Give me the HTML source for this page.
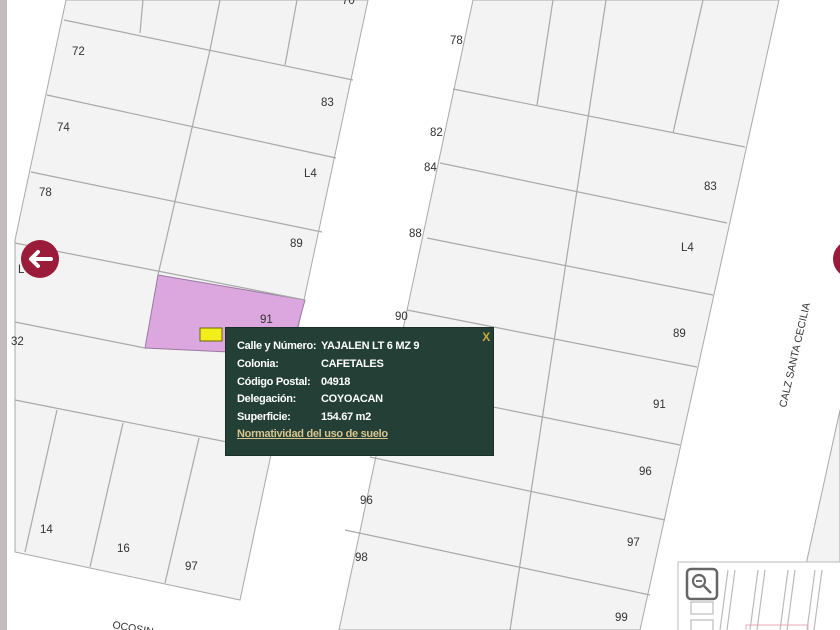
<!DOCTYPE html>
<html><head><meta charset="utf-8"><style>
html,body{margin:0;padding:0;width:840px;height:630px;overflow:hidden;background:#fff;font-family:"Liberation Sans",sans-serif}
svg{position:absolute;left:0;top:0}
.tip{position:absolute;left:225px;top:327px;width:269px;height:129px;background:#233f36;color:#fff;font-size:11px;font-weight:bold;box-sizing:border-box;border:1px solid #1a2e27;letter-spacing:-0.3px}
.tip .r{position:absolute;left:11px;white-space:nowrap}
.tip .v{position:absolute;left:95px;white-space:nowrap}
.tip a{position:absolute;left:11px;top:100px;color:#d8c48e;text-decoration:underline;font-size:11px}
.tip .x{position:absolute;right:3px;top:2px;color:#c9a93a;font-size:12px}
</style></head><body>
<svg width="840" height="630" viewBox="0 0 840 630">
<g fill="#f3f3f3" stroke="#a9a9a9" stroke-width="1">
<polygon points="66,0 368,0 240,600 15,552 15,240"/>
<polygon points="473,0 779,0 640,630 339,630"/>
<polygon points="840,410 840,630 800,630 807,560"/>
</g>
<polygon points="158,275 305,300 290,355 145,348" fill="#dba7de" stroke="#9a7aa0" stroke-width="1"/>
<g stroke="#a9a9a9" stroke-width="1.2" fill="none">
<line x1="64" y1="20" x2="353" y2="80"/>
<line x1="47" y1="95" x2="336" y2="158"/>
<line x1="31" y1="172" x2="322" y2="232"/>
<line x1="15" y1="243" x2="305" y2="300"/>
<line x1="15" y1="322" x2="145" y2="348"/>
<line x1="15" y1="400" x2="227" y2="442"/>
<line x1="143" y1="0" x2="140" y2="33"/>
<line x1="220" y1="0" x2="210" y2="50"/>
<line x1="297" y1="0" x2="285" y2="65"/>
<line x1="210" y1="50" x2="158" y2="275"/>
<line x1="57" y1="410" x2="25" y2="552"/>
<line x1="123" y1="423" x2="90" y2="567"/>
<line x1="199" y1="438" x2="165" y2="583"/>
<line x1="553" y1="0" x2="537" y2="105"/>
<line x1="703" y1="0" x2="673" y2="133"/>
<line x1="606" y1="0" x2="510" y2="630"/>
<line x1="453" y1="89" x2="745" y2="147"/>
<line x1="440" y1="163" x2="727" y2="223"/>
<line x1="427" y1="238" x2="713" y2="295"/>
<line x1="407" y1="310" x2="697" y2="367"/>
<line x1="400" y1="388" x2="680" y2="445"/>
<line x1="370" y1="457" x2="665" y2="520"/>
<line x1="345" y1="530" x2="650" y2="595"/>
</g>
<rect x="0" y="0" width="7" height="630" fill="#c2bcbe"/>
<g font-family="Liberation Sans, sans-serif" font-size="11.5" fill="#333">
<text x="72" y="55">72</text><text x="57" y="131">74</text><text x="39" y="196">78</text>
<text x="321" y="106">83</text><text x="304" y="177">L4</text><text x="290" y="247">89</text>
<text x="260" y="323">91</text><text x="11" y="345">32</text><text x="18" y="273">L</text>
<text x="40" y="533">14</text><text x="117" y="552">16</text><text x="185" y="570">97</text>
<text x="450" y="44">78</text><text x="430" y="136">82</text><text x="424" y="171">84</text>
<text x="409" y="237">88</text><text x="395" y="320">90</text><text x="360" y="504">96</text>
<text x="355" y="561">98</text><text x="342" y="4">70</text>
<text x="704" y="190">83</text><text x="681" y="251">L4</text><text x="673" y="337">89</text>
<text x="653" y="408">91</text><text x="639" y="475">96</text><text x="627" y="546">97</text>
<text x="615" y="621">99</text>
<text transform="translate(786,408) rotate(-77)" font-size="10.5">CALZ SANTA CECILIA</text>
<text transform="translate(112,628) rotate(10)" font-size="10.5">OCOSIN</text>
</g>
<circle cx="40" cy="259" r="19" fill="#9b1c3a"/>
<path d="M51 259 H31 M38 252 L31 259 L38 266" stroke="#fff" stroke-width="4" fill="none" stroke-linecap="round" stroke-linejoin="round"/>
<circle cx="852" cy="259" r="19" fill="#9b1c3a"/>
<rect x="200" y="328" width="22" height="13" fill="#f2ee1c" stroke="#6a6a00"/>
<rect x="678" y="562" width="170" height="80" fill="#fff" stroke="#bbb"/>
<g stroke="#bbb" fill="none" stroke-width="1.2">
<line x1="728" y1="570" x2="720" y2="630"/><line x1="735" y1="570" x2="727" y2="630"/>
<line x1="758" y1="570" x2="750" y2="630"/><line x1="765" y1="570" x2="757" y2="630"/>
<line x1="788" y1="570" x2="780" y2="630"/><line x1="795" y1="570" x2="787" y2="630"/>
<line x1="815" y1="570" x2="807" y2="630"/><line x1="822" y1="570" x2="814" y2="630"/>
<rect x="691" y="602" width="22" height="12"/><rect x="691" y="620" width="22" height="12"/>
</g>
<rect x="746" y="625" width="62" height="10" fill="none" stroke="#e7a8b5"/>
<rect x="687" y="569" width="30" height="30" rx="4" fill="#fff" stroke="#666" stroke-width="2.5"/>
<circle cx="699" cy="581" r="6" fill="none" stroke="#666" stroke-width="2.2"/>
<line x1="696" y1="581" x2="702" y2="581" stroke="#666" stroke-width="1.8"/>
<line x1="704" y1="586" x2="711" y2="593" stroke="#666" stroke-width="2.5"/>
</svg>
<div class="tip">
<span class="x">X</span>
<div class="r" style="top:12px">Calle y Número:</div><div class="v" style="top:12px">YAJALEN LT 6 MZ 9</div>
<div class="r" style="top:30px">Colonia:</div><div class="v" style="top:30px">CAFETALES</div>
<div class="r" style="top:48px">Código Postal:</div><div class="v" style="top:48px">04918</div>
<div class="r" style="top:65px">Delegación:</div><div class="v" style="top:65px">COYOACAN</div>
<div class="r" style="top:83px">Superficie:</div><div class="v" style="top:83px">154.67 m2</div>
<a>Normatividad del uso de suelo</a>
</div>
</body></html>
